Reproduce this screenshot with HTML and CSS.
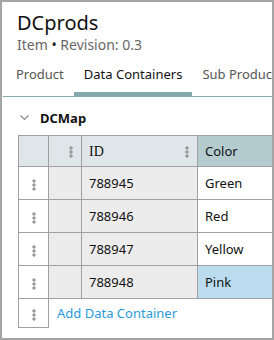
FILE: index.html
```html
<!DOCTYPE html>
<html lang="en">
<head>
    <meta charset="UTF-8">
    <title>DCprods</title>
    <link rel="stylesheet" href="styles.css">
</head>
<body>
    <div class="panel">
        <div class="head">
            <h1 class="title">DCprods</h1>
            <p class="meta">Item <span class="bullet">&#8226;</span> Revision: 0.3</p>
        </div>
        <ul class="tabs">
            <li class="tab">Product</li>
            <li class="tab on">Data Containers</li>
            <li class="tab">Sub Products</li>
        </ul>
        <div class="section">
            <div class="section-title">
                <svg class="chevron" width="9" height="6" viewBox="0 0 9 6"><path d="M0.5 0.5 L4.5 4.5 L8.5 0.5" fill="none" stroke="#8a8a8a" stroke-width="1.2"/></svg>
                <span>DCMap</span>
            </div>
            <table class="grid">
                <thead>
                    <tr>
                        <th class="c-drag"></th>
                        <th class="c-sel"><span class="dots right"></span></th>
                        <th class="c-id"><span class="serif">ID</span><span class="dots right"></span></th>
                        <th class="c-color on">Color</th>
                    </tr>
                </thead>
                <tbody>
                    <tr>
                        <td class="c-drag"><span class="dots"></span></td>
                        <td class="c-sel"></td>
                        <td class="c-id">788945</td>
                        <td class="c-color">Green</td>
                    </tr>
                    <tr>
                        <td class="c-drag"><span class="dots"></span></td>
                        <td class="c-sel"></td>
                        <td class="c-id">788946</td>
                        <td class="c-color">Red</td>
                    </tr>
                    <tr>
                        <td class="c-drag"><span class="dots"></span></td>
                        <td class="c-sel"></td>
                        <td class="c-id">788947</td>
                        <td class="c-color">Yellow</td>
                    </tr>
                    <tr>
                        <td class="c-drag"><span class="dots"></span></td>
                        <td class="c-sel"></td>
                        <td class="c-id">788948</td>
                        <td class="c-color picked">Pink</td>
                    </tr>
                    <tr class="add">
                        <td class="c-drag"><span class="dots"></span></td>
                        <td colspan="3" class="add-cell"><a href="#" class="add-link">Add Data Container</a></td>
                    </tr>
                </tbody>
            </table>
        </div>
    </div>
</body>
</html>
```

FILE: styles.css
```css
* {
    margin: 0;
    padding: 0;
    box-sizing: border-box;
}

body {
    font-family: "Noto Sans", "Open Sans", sans-serif;
    color: #111;
    background: #fff;
}

.panel {
    width: 274px;
    height: 340px;
    border: 2px solid #a5a5a5;
    overflow: hidden;
}

.head {
    padding: 8px 0 0 15px;
}
.title {
    font-size: 20px;
    font-weight: normal;
    line-height: 26px;
    color: #111;
}
.meta {
    font-size: 14px;
    line-height: 18px;
    color: #666;
}
.bullet {
    color: #222;
}

.tabs {
    list-style: none;
    display: flex;
    margin: 10px 0 0 1px;
    border-bottom: 1px solid #84aab0;
    white-space: nowrap;
}
.tab {
    font-size: 13px;
    line-height: 20px;
    padding: 0 10px 8px;
    color: #555;
    border-bottom: 4px solid transparent;
}
.tab:first-child {
    padding-left: 13px;
}
.tab.on {
    color: #111;
    border-bottom-color: #84aab0;
}

.section {
    padding: 12px 0 0 16px;
}
.section-title {
    display: flex;
    align-items: center;
    gap: 11px;
    padding-left: 2px;
    font-size: 13px;
    font-weight: bold;
    line-height: 18px;
}
.chevron {
    display: block;
}

.grid {
    margin-top: 8px;
    border-collapse: collapse;
    font-size: 13px;
    table-layout: fixed;
    width: 320px;
}
.grid th,
.grid td {
    border: 1px solid #a0a0a0;
    height: 33px;
    text-align: left;
    font-weight: normal;
    padding: 0 0 0 7px;
    position: relative;
}
.grid th {
    height: 31px;
    background: #dfe6e9;
}
.grid .c-drag {
    width: 30px;
    padding: 0;
    text-align: center;
    background: #fff;
}
.grid th.c-drag {
    background: #dfe6e9;
}
.grid .c-sel {
    width: 33px;
}
.grid td.c-sel,
.grid td.c-id {
    background: #ececec;
}
.grid .c-id {
    width: 116px;
}
.grid .c-color {
    width: 141px;
    background: #fff;
}
.grid th.c-color.on {
    background: #b4cbcf;
}
.grid td.picked {
    background: #badcee;
}
.serif {
    font-family: "Liberation Serif", serif;
    font-size: 14px;
}

.dots {
    display: inline-block;
    width: 4px;
    height: 12px;
    vertical-align: middle;
    background: radial-gradient(circle, #9a9a9a 1.5px, transparent 1.7px) 0 0 / 4px 4px repeat-y;
}
.dots.right {
    position: absolute;
    right: 8px;
    top: 10px;
}

.grid tr.add td {
    height: 29px;
}
.grid td.add-cell {
    border: none;
    border-top: 1px solid #a0a0a0;
    padding-left: 8px;
    background: #fff;
}
.add-link {
    color: #2a9ad8;
    text-decoration: none;
}
```
